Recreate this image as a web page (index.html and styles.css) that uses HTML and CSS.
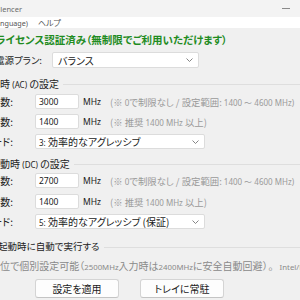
FILE: index.html
```html
<!DOCTYPE html>
<html lang="ja">
<head>
<meta charset="utf-8">
<title>CPU Silencer</title>
<link rel="stylesheet" href="styles.css">
</head>
<body>
<div class="window">
  <div class="titlebar">
    <div class="title"><span>CPU Silencer</span></div>
    <div class="spacer"></div>
    <div class="min"></div>
  </div>
  <div class="menubar">
    <div class="menu-lang"><span>言語 (Language)</span></div>
    <div class="menu-help">ヘルプ</div>
  </div>
  <div class="content">
    <div class="license">ライセンス認証済み（無制限でご利用いただけます）</div>
    <div class="row plan-row">
      <div class="lbl lbl-plan"><span>使用する電源プラン:</span></div>
      <div class="select select-plan"><span>バランス</span><svg width="7" height="4" viewBox="0 0 7 4"><polyline points="0.5,0.5 3.5,3.5 6.5,0.5" fill="none" stroke="#777" stroke-width="0.9"/></svg></div>
    </div>

    <div class="group-head"><span class="pre"><span>電源接続</span></span><span class="gh-text">時 <span class="lat">(AC)</span> の設定</span><span class="gh-line"></span></div>
    <div class="row r1">
      <div class="lbl"><span>最大周波数:</span></div>
      <div class="input">3000</div>
      <div class="unit">MHz</div>
      <div class="hint">(※ <span class="lat">0</span>で制限なし / 設定範囲: <span class="lat">1400 〜 4600 MHz)</span></div>
    </div>
    <div class="row r2">
      <div class="lbl"><span>最小周波数:</span></div>
      <div class="input">1400</div>
      <div class="unit">MHz</div>
      <div class="hint">(※ 推奨 <span class="lat">1400 MHz</span> 以上)</div>
    </div>
    <div class="row r3">
      <div class="lbl"><span>ブーストモード:</span></div>
      <div class="select select-mode"><span><span class="lat">3:</span> 効率的なアグレッシブ</span><svg width="7" height="4" viewBox="0 0 7 4"><polyline points="0.5,0.5 3.5,3.5 6.5,0.5" fill="none" stroke="#777" stroke-width="0.9"/></svg></div>
    </div>

    <div class="group-head dc"><span class="pre pre-dc"><span>バッテリー駆</span></span><span class="gh-text">動時 <span class="lat">(DC)</span> の設定</span><span class="gh-line"></span></div>
    <div class="row r1 dc1">
      <div class="lbl"><span>最大周波数:</span></div>
      <div class="input">2700</div>
      <div class="unit">MHz</div>
      <div class="hint">(※ <span class="lat">0</span>で制限なし / 設定範囲: <span class="lat">1400 〜 4600 MHz)</span></div>
    </div>
    <div class="row r2 dc2">
      <div class="lbl"><span>最小周波数:</span></div>
      <div class="input">1400</div>
      <div class="unit">MHz</div>
      <div class="hint">(※ 推奨 <span class="lat">1400 MHz</span> 以上)</div>
    </div>
    <div class="row r3">
      <div class="lbl"><span>ブーストモード:</span></div>
      <div class="select select-mode"><span><span class="lat">5:</span> 効率的なアグレッシブ (保証)</span><svg width="7" height="4" viewBox="0 0 7 4"><polyline points="0.5,0.5 3.5,3.5 6.5,0.5" fill="none" stroke="#777" stroke-width="0.9"/></svg></div>
    </div>

    <div class="startup"><span class="pre pre-st"><span>Windows</span></span><span class="st-text">起動時に自動で実行する</span><span class="gh-line"></span></div>
    <div class="note"><span class="pre pre-note"><span>※ 100MHz単</span></span><span class="note-text">位で個別設定可能（<span class="lat">2500MHz</span>入力時は<span class="lat">2400MHz</span>に安全自動回避<span class="full">）。</span><span class="lat">Intel/Ryzen</span>対応</span></div>

    <div class="buttons">
      <div class="btn">設定を適用</div>
      <div class="btn">トレイに常駐</div>
    </div>
  </div>
</div>
</body>
</html>
```
FILE: styles.css
```css
html, body {
  margin: 0;
  padding: 0;
}
body {
  width: 300px;
  height: 300px;
  overflow: hidden;
  background: #f0f0f0;
  font-family: "Noto Sans CJK JP", "Noto Sans", sans-serif;
  font-feature-settings: "palt";
  color: #1a1a1a;
  font-size: 10px;
}
.window {
  width: 300px;
}
.titlebar {
  height: 17px;
  display: flex;
  align-items: center;
  background: #f3f3f3;
}
.title {
  width: 22px;
  display: flex;
  justify-content: flex-end;
  white-space: nowrap;
  font-size: 7.5px;
  color: #6a6a6a;
  font-family: "Noto Sans", sans-serif;
}
.spacer { flex: 1; }
.min {
  width: 8px;
  height: 1px;
  background: #8a8a8a;
  margin-right: 10px;
}
.menubar {
  height: 11px;
  background: #ffffff;
  display: flex;
  align-items: center;
  font-size: 8px;
  color: #555;
}
.menu-lang {
  width: 28px;
  display: flex;
  justify-content: flex-end;
  white-space: nowrap;
  font-family: "Noto Sans", "Noto Sans CJK JP", sans-serif;
  font-size: 7.2px;
}
.menu-help {
  margin-left: 10px;
}
.content {
  padding-top: 6px;
}
.license {
  margin-left: -4px;
  white-space: nowrap;
  font-weight: bold;
  color: #1f8c1f;
  font-size: 10.5px;
  line-height: 12px;
}
.row {
  display: flex;
  align-items: center;
  height: 15px;
  margin-top: 5px;
}
.plan-row {
  margin-top: 6px;
  height: 16px;
}
.lbl {
  width: 13px;
  flex: none;
  display: flex;
  justify-content: flex-end;
  white-space: nowrap;
  margin-right: 22px;
}
.lbl-plan {
  width: 42px;
  margin-right: 10px;
  font-size: 9.5px;
}
.select {
  height: 100%;
  box-sizing: border-box;
  background: #fff;
  border: 1px solid #dcdcdc;
  border-radius: 2px;
  display: flex;
  align-items: center;
  justify-content: space-between;
  padding: 0 5px 0 5px;
  white-space: nowrap;
}
.select-plan { width: 147px; }
.select-mode { width: 170px; padding-left: 3px; }
.input {
  width: 44px;
  height: 100%;
  box-sizing: border-box;
  background: #fff;
  border: 1px solid #dcdcdc;
  border-radius: 2px;
  padding-left: 3px;
  font-size: 8.5px;
  display: flex;
  align-items: center;
  font-family: "Noto Sans", sans-serif;
}
.unit {
  margin-left: 4px;
  width: 27px;
  font-size: 8.5px;
  font-family: "Noto Sans", sans-serif;
}
.hint {
  white-space: nowrap;
  color: #9a9a9a;
  font-size: 9.4px;
}
.lat {
  font-family: "Noto Sans", sans-serif;
  font-size: 8px;
}
.pre {
  width: 0;
  flex: none;
  display: flex;
  justify-content: flex-end;
  white-space: nowrap;
}
.group-head {
  display: flex;
  align-items: center;
  height: 13px;
  margin-top: 9px;
  font-size: 10px;
  color: #222;
}
.group-head.dc { margin-top: 8px; }
.gh-text {
  white-space: nowrap;
}
.gh-line {
  flex: 1;
  height: 0;
  border-top: 1px solid #dedede;
  margin-left: 4px;
  margin-top: 2px;
}
.r1 { margin-top: 4px; }
.dc1 { margin-top: 3px; }
.dc2 { margin-top: 6px; }
.startup {
  display: flex;
  align-items: center;
  height: 12px;
  margin-top: 11px;
  font-size: 9.5px;
  color: #222;
}
.st-text {
  white-space: nowrap;
  margin-left: -2px;
}
.note {
  height: 12px;
  margin-top: 7px;
  display: flex;
  align-items: center;
  color: #8a8a8a;
  font-size: 10px;
}
.note-text {
  white-space: nowrap;
}
.note .lat {
  font-size: 7.8px;
}
.full {
  font-feature-settings: normal;
  letter-spacing: 1px;
}
.buttons {
  display: flex;
  gap: 21px;
  margin-top: 8px;
  padding-left: 35px;
}
.btn {
  width: 84px;
  height: 19px;
  box-sizing: border-box;
  background: #fdfdfd;
  border: 1px solid #d4d4d4;
  border-bottom-color: #c4c4c4;
  border-radius: 3px;
  display: flex;
  align-items: center;
  justify-content: center;
  font-size: 10px;
  color: #1a1a1a;
}
```
